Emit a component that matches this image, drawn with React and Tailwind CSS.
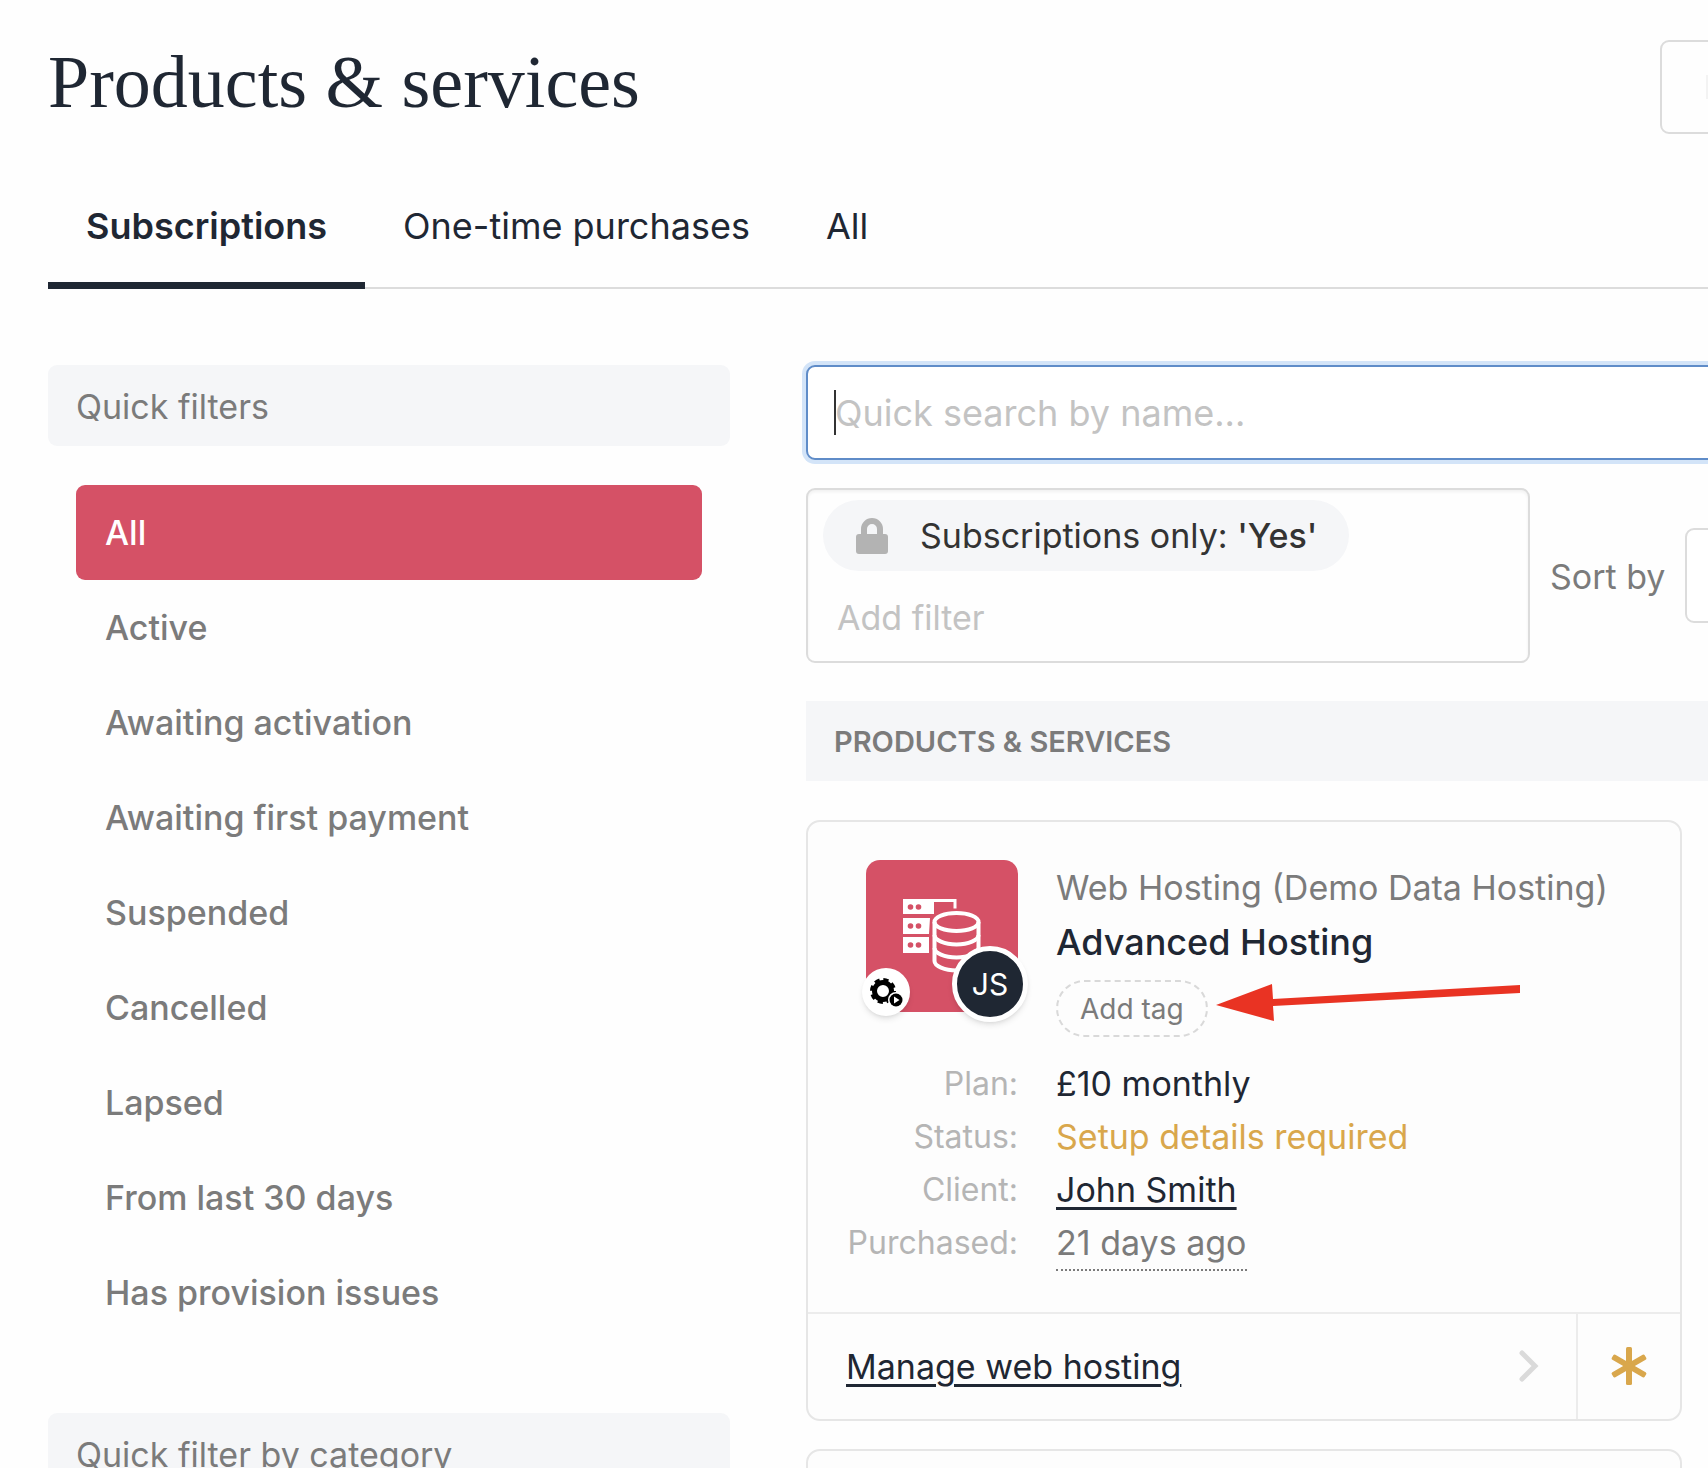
import React, { useState } from 'react'

const tabs = ['Subscriptions', 'One-time purchases', 'All']

const quickFilters = [
    'All',
    'Active',
    'Awaiting activation',
    'Awaiting first payment',
    'Suspended',
    'Cancelled',
    'Lapsed',
    'From last 30 days',
    'Has provision issues',
]

export default function App() {
    const [tab, setTab] = useState('Subscriptions')
    const [filter, setFilter] = useState('All')

    return (
        <div className="h-screen overflow-hidden bg-[#fefefe] pl-12 font-['Inter','Liberation_Sans',sans-serif] text-[34px] leading-[54px] text-[#7b7b7b]">
            {/* Page header */}
            <header className="flex items-start justify-between pt-10">
                <h1 className="font-['Liberation_Serif',serif] text-[74px] leading-[84px] text-[#1f2733]">
                    Products &amp; services
                </h1>
                <button
                    type="button"
                    aria-label="More"
                    className="-mr-3 flex h-[94px] w-[60px] shrink-0 items-center rounded-[9px] border-2 border-[#dcdcdc] pl-11"
                >
                    <span className="h-6 w-2 bg-[#f3f3f3]" />
                </button>
            </header>

            {/* Tabs */}
            <nav className="mt-[58px] flex h-[97px] border-b-2 border-[#dcdcdc]">
                {tabs.map((name) => (
                    <button
                        key={name}
                        type="button"
                        onClick={() => setTab(name)}
                        className={
                            name === tab
                                ? 'h-[97px] border-b-[7px] border-[#1f2733] px-[38px] pb-[23px] text-[36px] font-semibold text-[#1f2733]'
                                : 'h-[97px] border-b-[7px] border-transparent px-[38px] pb-[23px] text-[36px] text-[#1f2733]'
                        }
                    >
                        {name}
                    </button>
                ))}
            </nav>

            <div className="mt-[76px] flex items-start gap-[76px]">
                {/* Sidebar */}
                <aside className="w-[682px] shrink-0">
                    <h2 className="rounded-[9px] bg-[#f5f6f8] px-7 pt-[15px] pb-3">Quick filters</h2>
                    <ul className="mt-[39px] mb-[73px] px-7">
                        {quickFilters.map((name) => (
                            <li key={name}>
                                <button
                                    type="button"
                                    onClick={() => setFilter(name)}
                                    className={
                                        name === filter
                                            ? 'h-[95px] w-full rounded-[9px] bg-[#d55166] px-[29px] pt-px text-left font-medium text-white'
                                            : 'h-[95px] w-full rounded-[9px] px-[29px] pt-px text-left font-medium'
                                    }
                                >
                                    {name}
                                </button>
                            </li>
                        ))}
                    </ul>
                    <h2 className="rounded-[9px] bg-[#f5f6f8] px-7 pt-[15px] pb-3">Quick filter by category</h2>
                </aside>

                {/* Results */}
                <main className="min-w-0 flex-1">
                    <div className="relative -mr-6">
                        <input
                            type="text"
                            aria-label="Quick search by name"
                            placeholder="Quick search by name..."
                            className="h-[95px] w-full rounded-[9px] border-2 border-[#5f8cc8] bg-white px-[27px] text-[36px] text-[#333] ring-4 ring-[#d3e4f8] outline-none placeholder:text-[#c3c3c3]"
                        />
                        <span className="absolute top-[25px] left-[28px] h-[45px] w-[2px] bg-[#333]" />
                    </div>

                    <div className="mt-7 flex items-center">
                        <div className="h-[175px] w-[724px] shrink-0 rounded-[9px] border-2 border-[#dcdcdc] px-[15px] pt-[10px] shadow-[inset_0_2px_3px_#f1f1f1]">
                            <div className="flex h-[71px] w-fit items-center rounded-full bg-[#f5f6f8] pr-8 pl-[33px] text-[#333]">
                                <LockIcon />
                                <span className="ml-8">
                                    Subscriptions only: <span className="font-medium">'Yes'</span>
                                </span>
                            </div>
                            <input
                                type="text"
                                aria-label="Add filter"
                                placeholder="Add filter"
                                className="mt-[20px] block w-full px-[14px] outline-none placeholder:text-[#c3c3c3]"
                            />
                        </div>
                        <label htmlFor="sort" className="ml-5 shrink-0 pt-[3px]">Sort by</label>
                        <select
                            id="sort"
                            className="ml-5 h-[95px] w-[200px] shrink-0 appearance-none rounded-[9px] border-2 border-[#dcdcdc] bg-white"
                        />
                    </div>

                    <h3 className="mt-[38px] bg-[#f5f6f8] px-7 pt-[14px] pb-3 text-[29px] font-semibold uppercase">
                        Products &amp; services
                    </h3>

                    <ProductCard />
                    <div className="mt-7 mr-[26px] h-[600px] rounded-[14px] border-2 border-[#e6e6e6] bg-[#fdfdfd]" />
                </main>
            </div>
        </div>
    )
}

function ProductCard() {
    return (
        <article className="mt-[39px] mr-[26px] rounded-[14px] border-2 border-[#e6e6e6] bg-[#fdfdfd]">
            <div className="grid grid-cols-[172px_1fr] gap-x-[38px] px-[38px] pt-[38px] pb-[43px]">
                <div className="relative h-[152px] w-[152px] justify-self-end rounded-[14px] bg-[#d55166]">
                    <HostingIcon />
                    <span className="absolute bottom-[-4px] left-[-4px] flex h-12 w-12 items-center justify-center rounded-full bg-white shadow-md">
                        <GearIcon />
                    </span>
                    <span className="absolute right-[-10px] bottom-[-10px] flex h-[76px] w-[76px] items-center justify-center rounded-full border-[5px] border-white bg-[#1f2733] text-[30px] text-white shadow-md">
                        JS
                    </span>
                </div>
                <div className="pt-px">
                    <p className="whitespace-nowrap">Web Hosting (Demo Data Hosting)</p>
                    <h4 className="text-[36px] font-medium text-[#1f2733]">Advanced Hosting</h4>
                    <div className="mt-[11px] flex items-start gap-2">
                        <button
                            type="button"
                            className="h-[57px] shrink-0 rounded-full border-2 border-dashed border-[#d9d9d9] px-[22px] text-[28px]"
                        >
                            Add tag
                        </button>
                        <Arrow />
                    </div>
                </div>

                <dl className="col-span-2 mt-[20px] grid grid-cols-[172px_1fr] auto-rows-[53px] gap-x-[38px] leading-[53px] text-[#b5b5b5] [&>dt]:text-right [&>dt]:text-[32px]">
                    <dt>Plan:</dt>
                    <dd className="text-[#1f2733]">£10 monthly</dd>
                    <dt>Status:</dt>
                    <dd className="text-[#d9a74c]">Setup details required</dd>
                    <dt>Client:</dt>
                    <dd>
                        <a href="#client" className="text-[#1f2733] underline decoration-[3px] underline-offset-[5px]">John Smith</a>
                    </dd>
                    <dt>Purchased:</dt>
                    <dd>
                        <span className="inline-block border-b-2 border-dotted border-[#7b7b7b] text-[#7b7b7b]">21 days ago</span>
                    </dd>
                </dl>
            </div>

            <div className="flex h-[107px] border-t-2 border-[#ececec]">
                <a href="#manage" className="flex flex-1 items-center justify-between pr-9 pl-[38px] text-[#1f2733]">
                    <span className="pt-px underline decoration-[3px] underline-offset-[5px]">Manage web hosting</span>
                    <svg className="h-9 w-[22px]" viewBox="0 0 22 36" fill="none" stroke="#dadada" strokeWidth="5">
                        <path d="M4 4l13 13L4 30" strokeLinecap="round" />
                    </svg>
                </a>
                <button type="button" aria-label="Setup required" className="flex w-[104px] items-center justify-center border-l-2 border-[#ececec]">
                    <svg className="h-10 w-10" viewBox="0 0 40 40" fill="#d9a74c">
                        <rect x="17" y="0" width="6" height="38" rx="1.500" />
                        <rect x="17" y="0" width="6" height="38" rx="1.500" transform="rotate(60 20 19)" />
                        <rect x="17" y="0" width="6" height="38" rx="1.500" transform="rotate(120 20 19)" />
                    </svg>
                </button>
            </div>
        </article>
    )
}

function LockIcon() {
    return (
        <svg className="h-9 w-8" viewBox="0 0 32 36">
            <path d="M8 18V11a8 8 0 0 1 16 0v7" fill="none" stroke="#b3b3b3" strokeWidth="6" />
            <rect x="0" y="16" width="32" height="20" rx="3" fill="#b3b3b3" />
        </svg>
    )
}

// Server rack with a database cylinder in front of it
function HostingIcon() {
    return (
        <svg className="absolute top-[38px] left-[37px] h-[76px] w-20" viewBox="0 0 80 76">
            <g fill="#fff">
                <path d="M0 1h31v15H0z" />
                <path d="M0 20h27l-1 16H0z" />
                <path d="M0 39h26v16H0z" />
            </g>
            <g fill="#d55166">
                <circle cx="7.500" cy="9" r="2.800" />
                <circle cx="15.500" cy="9" r="2.800" />
                <circle cx="7.500" cy="28" r="2.800" />
                <circle cx="15.500" cy="28" r="2.800" />
                <circle cx="7.500" cy="47" r="2.800" />
                <circle cx="15.500" cy="47" r="2.800" />
            </g>
            <g fill="none" stroke="#fff" strokeWidth="4">
                <path d="M30 2.500h22v8" strokeWidth="3" />
                <ellipse cx="53.500" cy="24" rx="22" ry="9" />
                <path d="M31.500 24v39c0 5 10 9.500 22 9.500s22-4.500 22-9.500V24" />
                <path d="M31.500 37c0 5 10 9.500 22 9.500s22-4.500 22-9.500" />
                <path d="M31.500 50c0 5 10 9.500 22 9.500s22-4.500 22-9.500" />
            </g>
        </svg>
    )
}

function GearIcon() {
    return (
        <svg className="h-[34px] w-[34px]" viewBox="0 0 34 34">
            <circle cx="14" cy="16" r="8.500" fill="none" stroke="#000" strokeWidth="5" />
            <circle cx="14" cy="16" r="11" fill="none" stroke="#000" strokeWidth="4" strokeDasharray="5 3.640" />
            <circle cx="27" cy="25" r="8" fill="#fff" />
            <circle cx="27" cy="25" r="6.500" fill="#000" />
            <path d="M25 21.500l5.500 3.500-5.500 3.500z" fill="#fff" />
        </svg>
    )
}

function Arrow() {
    return (
        <svg className="h-[42px] w-[306px]" viewBox="0 0 306 42" fill="#e93323">
            <path d="M0 25L56 4l1 15L304 5v8L57 26l1 15z" />
        </svg>
    )
}
